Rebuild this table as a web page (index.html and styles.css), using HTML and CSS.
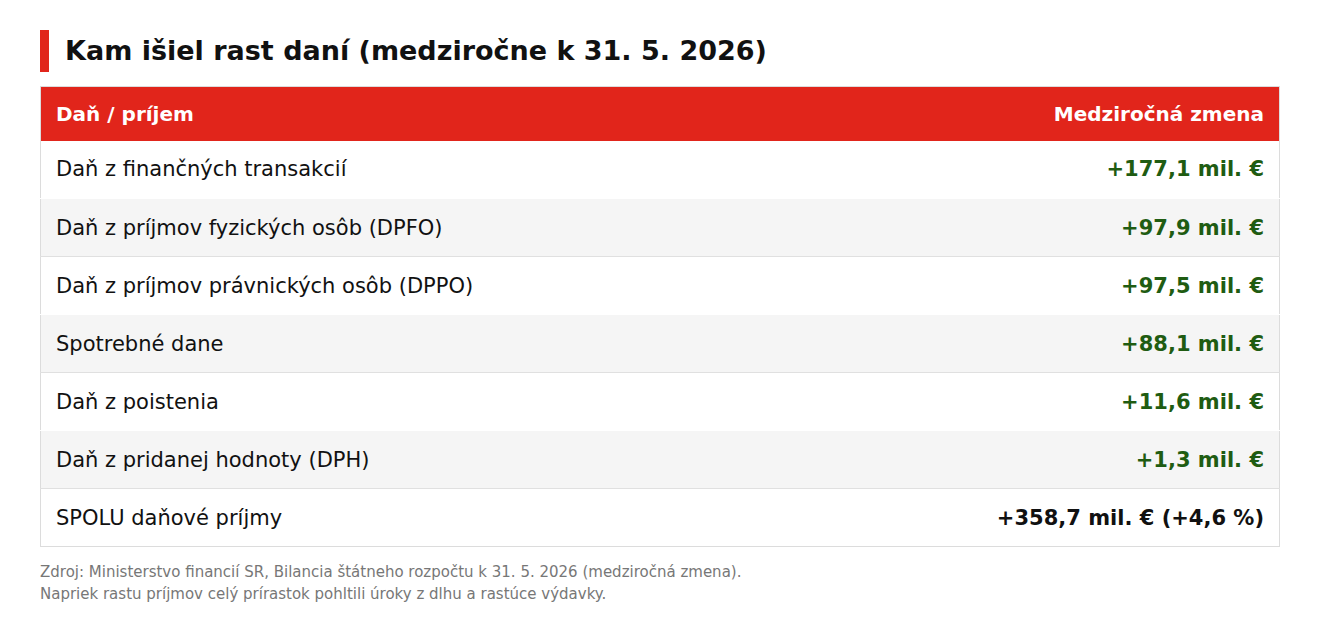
FILE: index.html
```html
<!DOCTYPE html>
<html lang="sk">
<head>
<meta charset="utf-8">
<title>Kam išiel rast daní</title>
<link rel="stylesheet" href="styles.css">
</head>
<body>
<div class="wrap">
  <h1 class="title">Kam išiel rast daní (medziročne k 31. 5. 2026)</h1>
  <table class="tbl">
    <thead>
      <tr><th class="l">Daň / príjem</th><th class="r">Medziročná zmena</th></tr>
    </thead>
    <tbody>
      <tr><td class="l">Daň z finančných transakcií</td><td class="r pos">+177,1 mil. €</td></tr>
      <tr><td class="l">Daň z príjmov fyzických osôb (DPFO)</td><td class="r pos">+97,9 mil. €</td></tr>
      <tr><td class="l">Daň z príjmov právnických osôb (DPPO)</td><td class="r pos">+97,5 mil. €</td></tr>
      <tr><td class="l">Spotrebné dane</td><td class="r pos">+88,1 mil. €</td></tr>
      <tr><td class="l">Daň z poistenia</td><td class="r pos">+11,6 mil. €</td></tr>
      <tr><td class="l">Daň z pridanej hodnoty (DPH)</td><td class="r pos">+1,3 mil. €</td></tr>
      <tr class="total"><td class="l">SPOLU daňové príjmy</td><td class="r">+358,7 mil. € (+4,6 %)</td></tr>
    </tbody>
  </table>
  <p class="note">Zdroj: Ministerstvo financií SR, Bilancia štátneho rozpočtu k 31. 5. 2026 (medziročná zmena).<br>Napriek rastu príjmov celý prírastok pohltili úroky z dlhu a rastúce výdavky.</p>
</div>
</body>
</html>
```
FILE: styles.css
```css
html, body {
  margin: 0;
  padding: 0;
  background: #fff;
}
body {
  font-family: "DejaVu Sans", sans-serif;
  color: #111;
}
.wrap {
  padding: 30px 40px 0 40px;
}
.title {
  margin: 0 0 14px 0;
  font-size: 27px;
  font-weight: bold;
  line-height: 42px;
  border-left: 9px solid #e1251b;
  padding-left: 16px;
  color: #111;
}
.tbl {
  width: 100%;
  border-collapse: collapse;
  border: 1px solid #dcdcdc;
}
.tbl th {
  background: #e1251b;
  color: #fff;
  font-size: 20px;
  font-weight: bold;
  height: 54px;
  padding: 0 15px;
  box-sizing: border-box;
}
.tbl td {
  font-size: 21px;
  height: 58px;
  padding: 0 15px;
  box-sizing: border-box;
  border-bottom: 1px solid #fff;
}
.tbl tbody tr:nth-child(even) td {
  background: #f5f5f5;
  border-bottom: 1px solid #e0e0e0;
}
.tbl tbody tr.total td {
  border-bottom: 1px solid #dcdcdc;
}
.l { text-align: left; }
.r { text-align: right; }
.pos {
  color: #1f5c12;
  font-weight: bold;
}
.total .r {
  font-weight: bold;
  color: #111;
}
.note {
  margin: 14px 0 0 0;
  font-size: 15px;
  line-height: 22px;
  color: #777;
}
```
